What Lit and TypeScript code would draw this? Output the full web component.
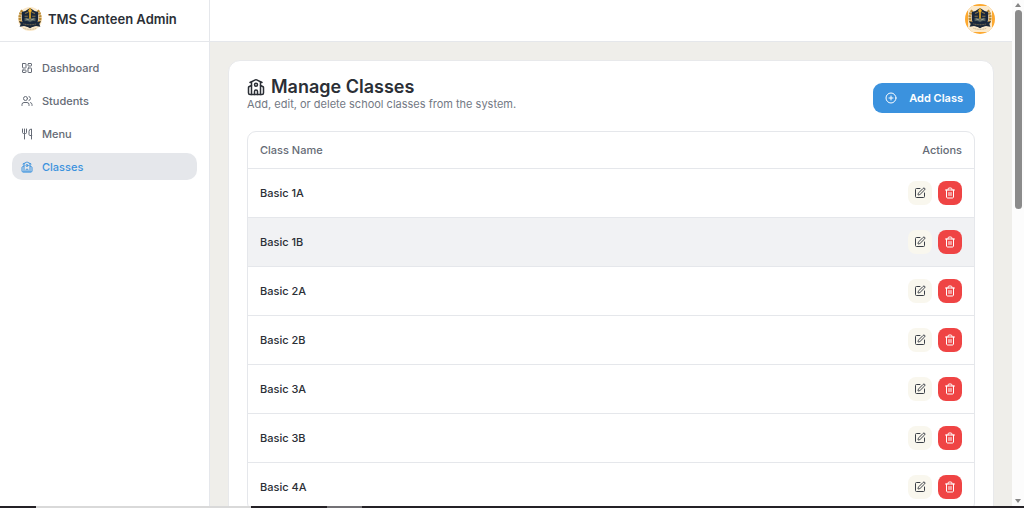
import { LitElement, html, css, svg } from "lit";
import { customElement, property } from "lit/decorators.js";

const icons: Record<string, unknown> = {
  dashboard: svg`<rect width="7" height="9" x="3" y="3" rx="1"/><rect width="7" height="5" x="14" y="3" rx="1"/><rect width="7" height="9" x="14" y="12" rx="1"/><rect width="7" height="5" x="3" y="16" rx="1"/>`,
  users: svg`<path d="M16 21v-2a4 4 0 0 0-4-4H6a4 4 0 0 0-4 4v2"/><circle cx="9" cy="7" r="4"/><path d="M22 21v-2a4 4 0 0 0-3-3.87"/><path d="M16 3.13a4 4 0 0 1 0 7.75"/>`,
  utensils: svg`<path d="M3 2v7c0 1.1.9 2 2 2h4a2 2 0 0 0 2-2V2"/><path d="M7 2v20"/><path d="M21 15V2a5 5 0 0 0-5 5v6c0 1.1.9 2 2 2h3Zm0 0v7"/>`,
  school: svg`<path d="M14 22v-4a2 2 0 1 0-4 0v4"/><path d="m18 10 3.447 1.724a1 1 0 0 1 .553.894V20a2 2 0 0 1-2 2H4a2 2 0 0 1-2-2v-7.382a1 1 0 0 1 .553-.894L6 10"/><path d="M18 5v17"/><path d="m4 6 7.106-3.553a2 2 0 0 1 1.788 0L20 6"/><path d="M6 5v17"/><circle cx="12" cy="9" r="2"/>`,
  plus: svg`<circle cx="12" cy="12" r="10"/><path d="M8 12h8"/><path d="M12 8v8"/>`,
  edit: svg`<path d="M12 3H5a2 2 0 0 0-2 2v14a2 2 0 0 0 2 2h14a2 2 0 0 0 2-2v-7"/><path d="M18.375 2.625a1 1 0 0 1 3 3l-9.013 9.014a2 2 0 0 1-.853.505l-2.873.84a.5.5 0 0 1-.62-.62l.84-2.873a2 2 0 0 1 .506-.852z"/>`,
  trash: svg`<path d="M3 6h18"/><path d="M19 6v14c0 1-1 2-2 2H7c-1 0-2-1-2-2V6"/><path d="M8 6V4c0-1 1-2 2-2h4c1 0 2 1 2 2v2"/><path d="M10 11v6"/><path d="M14 11v6"/>`,
};

@customElement("line-icon")
class LineIcon extends LitElement {
  @property() name = "";
  static styles = css`
    :host { display: block; flex: none; width: 12px; height: 12px; }
    svg { display: block; width: 100%; height: 100%; }
  `;
  render() {
    return html`<svg viewBox="0 0 24 24" fill="none" stroke="currentColor" stroke-width="2" stroke-linecap="round" stroke-linejoin="round" aria-hidden="true">${icons[this.name]}</svg>`;
  }
}

@customElement("school-crest")
class SchoolCrest extends LitElement {
  static styles = css`
    :host { display: block; flex: none; }
    svg { display: block; width: 100%; height: 100%; }
  `;
  render() {
    return html`<svg viewBox="2 3 44 44" aria-hidden="true">
      <circle cx="24" cy="25" r="22" fill="#fbe9cb"/>
      <path d="M10 9C4 16 4 27 9 34M38 9c6 7 6 18 1 25" fill="none" stroke="#b98a35" stroke-width="5" stroke-dasharray="4 1"/>
      <path d="M9 12q8-1 15-7 7 6 15 7v13q0 11-15 17-15-6-15-17z" fill="#17263c"/>
      <path d="M15 15l6-3M33 15l-6-3M14 20h6M28 20h6" stroke="#8b7444" stroke-width="2"/>
      <path d="M24 5l3 5-2 3v13h-2V13l-2-3z" fill="#f0b022" stroke="#f0b022"/>
      <path d="M14 23q6-1 10 2 4-3 10-2v6q-6-1-10 2-4-3-10-2z" fill="#53605f"/>
      <path d="M17 25l6 2M31 25l-6 2" stroke="#e5d6ae" stroke-width="1"/>
      <path d="M4 29l8 2q12 4 24 0l8-2-3 5 2 5-8-1q-11 4-22 0l-8 1 2-5z" fill="#1c293b"/>
      <path d="M12 34q12 3 24 0" fill="none" stroke="#c6a766" stroke-width="1" stroke-dasharray="2 1"/>
      <path d="M12 42q12 4 24 0" fill="none" stroke="#9b8b6c" stroke-width="1" stroke-dasharray="2 1"/>
    </svg>`;
  }
}

const nav = [
  { label: "Dashboard", icon: "dashboard" },
  { label: "Students", icon: "users" },
  { label: "Menu", icon: "utensils" },
  { label: "Classes", icon: "school", active: true },
];

const classes = ["Basic 1A", "Basic 1B", "Basic 2A", "Basic 2B", "Basic 3A", "Basic 3B", "Basic 4A"];

@customElement("app-root")
class AppRoot extends LitElement {
  static styles = css`
    :host {
      display: flex; flex-direction: column; height: 100vh; overflow: hidden;
      font-family: Inter, "Open Sans", sans-serif; font-size: 11px; line-height: 16px;
      color: #2b2f36; background: #fff;
    }
    * { box-sizing: border-box; }
    .window { flex: 1; min-height: 0; display: flex; }
    .sidebar { flex: none; width: 210px; border-right: 1px solid #e5e7eb; }
    .brand {
      display: flex; align-items: center; gap: 6px; height: 42px; padding: 0 18px 3px;
      border-bottom: 1px solid #e5e7eb; font-size: 13px; font-weight: 600;
    }
    .brand school-crest { width: 24px; height: 24px; }
    nav { display: grid; gap: 6px; padding: 12px; }
    nav a {
      display: flex; align-items: center; gap: 9px; height: 27px; padding: 0 9px;
      border-radius: 10px; color: #656b76; font-weight: 500; text-decoration: none;
    }
    nav a.active { background: #e5e7eb; color: #3b92de; }
    .page { flex: 1; min-width: 0; display: flex; flex-direction: column; }
    .topbar {
      flex: none; display: flex; align-items: center; justify-content: flex-end;
      height: 42px; padding: 0 17px 3px; border-bottom: 1px solid #e5e7eb;
    }
    .avatar {
      width: 30px; height: 30px; padding: 0; border: 0; border-radius: 50%; overflow: hidden;
      background: #fda930; display: grid; place-items: center;
    }
    .avatar span { display: grid; place-items: center; width: 24px; height: 26px; background: #fbe9cb; }
    .avatar school-crest { width: 24px; height: 24px; }
    main { flex: 1; min-height: 0; overflow: hidden; padding: 18px; background: #efeeea; }
    .card { padding: 17px 18px; border: 1px solid #e8e9eb; border-radius: 12px; background: #fff; }
    .card-head { display: flex; align-items: flex-end; justify-content: space-between; margin-bottom: 18px; }
    .titles { padding-bottom: 1px; }
    h1 { display: flex; align-items: center; gap: 6px; margin: 0; font-size: 18px; line-height: 18px; font-weight: 600; }
    h1 line-icon { width: 18px; height: 18px; }
    p { margin: 0; color: #737984; }
    .add {
      display: flex; align-items: center; gap: 12px; height: 30px; padding: 0 12px;
      border: 0; border-radius: 9px; background: #3b92de; color: #fff; font: inherit; font-weight: 600;
    }
    .table-box { border: 1px solid #e5e7eb; border-radius: 9px; overflow: hidden; }
    table { width: 100%; border-collapse: collapse; }
    th, td { padding: 0 12px; text-align: left; font-weight: 500; }
    th { height: 36px; color: #656b76; }
    td { height: 49px; border-top: 1px solid #e5e7eb; }
    th:last-child { text-align: right; }
    tr.hover { background: #f1f2f4; }
    .actions { display: flex; justify-content: flex-end; gap: 6px; }
    .actions button {
      display: grid; place-items: center; width: 24px; height: 24px; padding: 0; border: 0;
      border-radius: 8px; background: #f9f7ee; color: #3a3f47;
    }
    .actions .delete { background: #ef4444; color: #fff; }
    .scrollbar { flex: none; width: 12px; display: flex; flex-direction: column; align-items: center; gap: 3px; padding: 3px 0; background: #fcfcfc; }
    .arrow { flex: none; border: 3px solid transparent; border-top: 0; border-bottom: 4px solid #858585; }
    .arrow.down { border-top: 4px solid #858585; border-bottom: 0; }
    .track { flex: 1; }
    .thumb { width: 7px; height: 41%; border-radius: 4px; background: #8b8b8b; }
    .strip { flex: none; display: flex; height: 2px; background: #242126; }
    .strip i { background: #d9d9d9; }
    .strip .a { width: 21%; margin-left: 36px; }
    .strip .b { width: 35px; margin-left: 76px; background: #737175; }
  `;

  render() {
    return html`
      <div class="window">
        <aside class="sidebar">
          <div class="brand"><school-crest></school-crest>TMS Canteen Admin</div>
          <nav>
            ${nav.map((n) => html`<a href="#" class=${n.active ? "active" : ""}><line-icon name=${n.icon}></line-icon>${n.label}</a>`)}
          </nav>
        </aside>
        <div class="page">
          <header class="topbar">
            <button class="avatar" aria-label="Account"><span><school-crest></school-crest></span></button>
          </header>
          <main>
            <section class="card">
              <div class="card-head">
                <div class="titles">
                  <h1><line-icon name="school"></line-icon>Manage Classes</h1>
                  <p>Add, edit, or delete school classes from the system.</p>
                </div>
                <button class="add"><line-icon name="plus"></line-icon>Add Class</button>
              </div>
              <div class="table-box">
                <table>
                  <thead><tr><th>Class Name</th><th>Actions</th></tr></thead>
                  <tbody>
                    ${classes.map((c, i) => html`<tr class=${i === 1 ? "hover" : ""}>
                      <td>${c}</td>
                      <td><div class="actions">
                        <button aria-label="Edit ${c}"><line-icon name="edit"></line-icon></button>
                        <button class="delete" aria-label="Delete ${c}"><line-icon name="trash"></line-icon></button>
                      </div></td>
                    </tr>`)}
                  </tbody>
                </table>
              </div>
            </section>
          </main>
        </div>
        <div class="scrollbar" aria-hidden="true">
          <span class="arrow"></span>
          <div class="track"><div class="thumb"></div></div>
          <span class="arrow down"></span>
        </div>
      </div>
      <div class="strip" aria-hidden="true"><i class="a"></i><i class="b"></i></div>
    `;
  }
}
